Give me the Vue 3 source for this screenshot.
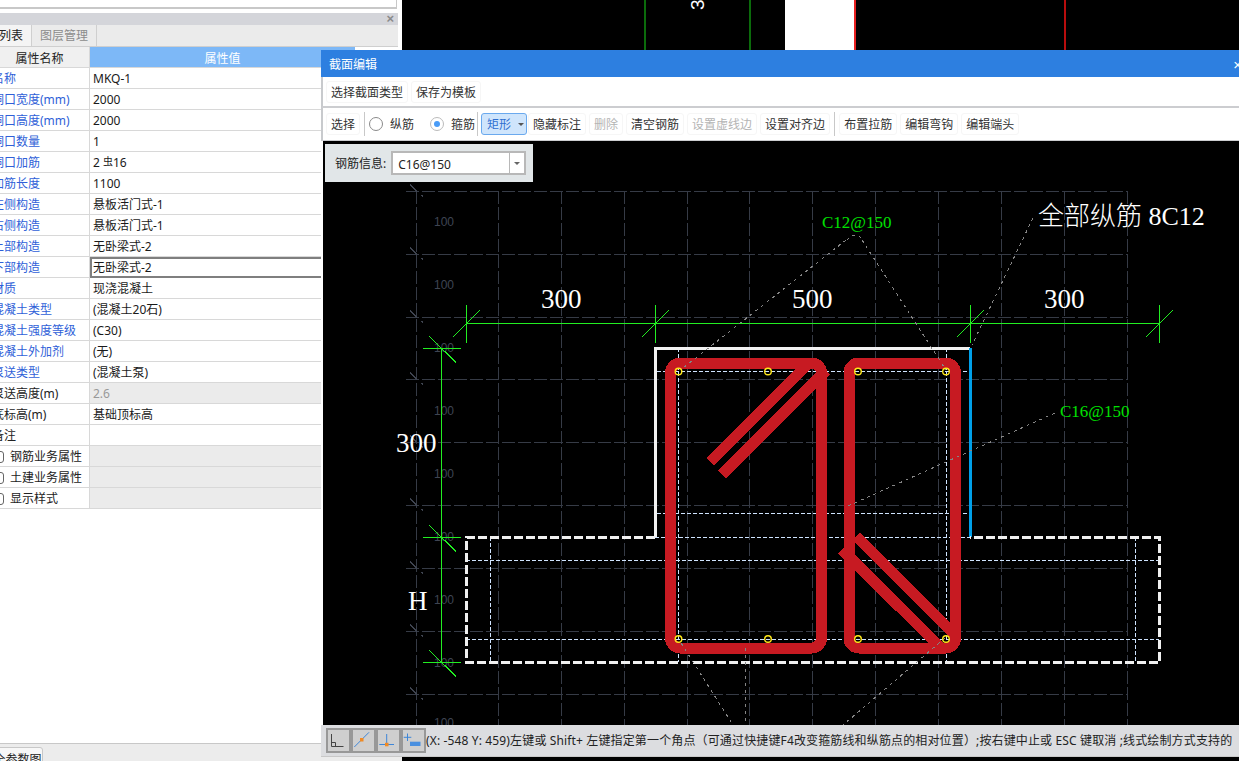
<script setup>
const rows = [
  { n: '名称', v: 'MKQ-1', blue: true },
  { n: '洞口宽度(mm)', v: '2000', blue: true },
  { n: '洞口高度(mm)', v: '2000', blue: true },
  { n: '洞口数量', v: '1', blue: true },
  { n: '洞口加筋', v: '', rebar: true, blue: true },
  { n: '加筋长度', v: '1100', blue: true },
  { n: '左侧构造', v: '悬板活门式-1', blue: true },
  { n: '右侧构造', v: '悬板活门式-1', blue: true },
  { n: '上部构造', v: '无卧梁式-2', blue: true },
  { n: '下部构造', v: '无卧梁式-2', blue: true, sel: true },
  { n: '材质', v: '现浇混凝土', blue: true },
  { n: '混凝土类型', v: '(混凝土20石)', blue: true },
  { n: '混凝土强度等级', v: '(C30)', blue: true },
  { n: '混凝土外加剂', v: '(无)', blue: true },
  { n: '泵送类型', v: '(混凝土泵)', blue: true },
  { n: '泵送高度(m)', v: '2.6', off: true },
  { n: '底标高(m)', v: '基础顶标高' },
  { n: '备注', v: '' },
  { n: '钢筋业务属性', v: '', group: true },
  { n: '土建业务属性', v: '', group: true },
  { n: '显示样式', v: '', group: true }
]
const tools = [
  { t: '布置拉筋' }, { t: '编辑弯钩' }, { t: '编辑端头' }
]
const gridX = [416.5, 498.5, 561.5, 624.5, 687.5, 749.5, 812.5, 875.5, 938.5, 1001.5, 1064.5, 1127.5]
const gridY = [191.5, 254.5, 317.5, 379.5, 442.5, 505.5, 568.5, 631.5, 694.5]
const labelY = [226, 289, 352, 415, 478, 541, 604, 667, 727]
const points = [
  [678.5, 371.5], [768, 371.5], [858, 371.5], [946, 371.5],
  [678.5, 639], [768, 639], [858, 639], [946, 639]
]
const dimX = [466.5, 655.5, 970.5, 1159.5]
const dimY = [348.5, 537.5, 662.5]
const leaders = [
  'M846 240L683 368', 'M862 240L946 370', 'M847 240Q855 230 863 240',
  'M1033 218L972 345', 'M1055 413L848 506',
  'M681 643L733 725', 'M945 638L843 725', 'M745.5 648V725'
]
</script>

<template>
  <div class="screen">
    <aside class="side">
      <div class="side-top"></div>
      <div class="side-head"><span class="side-x">×</span></div>
      <div class="tabs">
        <span class="tab on">构件列表</span>
        <span class="tab">图层管理</span>
      </div>
      <div class="table">
        <div class="tr thead">
          <div class="th">属性名称</div>
          <div class="th val">属性值</div>
        </div>
        <div v-for="r in rows" :key="r.n" class="tr">
          <div class="name" :class="{ blue: r.blue }">
            <template v-if="r.group"><i class="check"></i></template>{{ r.n }}
          </div>
          <div class="value" :class="{ off: r.off, shade: r.group, sel: r.sel }">
            <template v-if="r.rebar">2<small class="rebar">虫</small>16</template>
            <template v-else>{{ r.v }}</template>
          </div>
        </div>
      </div>
      <div class="side-foot"><span class="foot-tab">全参数图</span></div>
    </aside>

    <main class="stage">
      <svg class="stage-art" width="837" height="50" viewBox="402 0 837 50">
        <rect x="785" y="0" width="69" height="50" fill="#fff" />
        <rect x="644" y="0" width="2" height="50" fill="#0b6b0b" />
        <rect x="749" y="0" width="2" height="50" fill="#0b6b0b" />
        <rect x="854" y="0" width="2" height="50" fill="#e82020" />
        <rect x="1064" y="0" width="2" height="50" fill="#b80d0d" />
        <text class="stage-num" transform="translate(704 10) rotate(-90)">3</text>
      </svg>
    </main>

    <section class="dialog">
      <header class="title">
        <span>截面编辑</span>
        <span class="close">×</span>
      </header>
      <div class="menu">
        <button class="btn">选择截面类型</button>
        <button class="btn">保存为模板</button>
      </div>
      <div class="toolbar">
        <button class="btn">选择</button>
        <i class="sep first"></i>
        <label class="radio"><i class="dot"></i>纵筋</label>
        <label class="radio second"><i class="dot checked"></i>箍筋</label>
        <i class="sep tight"></i>
        <button class="btn picked">矩形<i class="caret"></i></button>
        <button class="btn">隐藏标注</button>
        <button class="btn dim">删除</button>
        <button class="btn">清空钢筋</button>
        <button class="btn dim">设置虚线边</button>
        <button class="btn">设置对齐边</button>
        <i class="sep wide"></i>
        <button v-for="t in tools" :key="t.t" class="btn">{{ t.t }}</button>
      </div>

      <div class="canvas">
        <svg class="drawing" width="916" height="584" viewBox="323 141 916 584">
          <g class="grid">
            <path v-for="x in gridX" :key="'x' + x" :d="`M${x} 191V725`" />
            <path v-for="y in gridY" :key="'y' + y" :d="`M406 ${y}H1128`" />
          </g>
          <g class="ticks">
            <path v-for="y in gridY" :key="'t' + y" :d="`M410 ${y - 7}L417 ${y}M421 ${y + 4}h1v1`" />
          </g>
          <text v-for="y in labelY" :key="'l' + y" class="hundred" x="434" :y="y">100</text>

          <g class="dim">
            <path d="M466 323.5H1160M441.5 349V662" />
            <g v-for="x in dimX" :key="'dx' + x">
              <path :d="`M${x} 305V343M${x - 13.5} 337L${x + 13.5} 310`" />
            </g>
            <g v-for="y in dimY" :key="'dy' + y">
              <path :d="`M423 ${y}H461M429 ${y - 12.5}L456 ${y + 14}`" />
            </g>
          </g>

          <g class="inner">
            <path d="M466 560.5H1159M466 639.5H1159M490.5 537V662M1135.5 537V662" />
            <path d="M678.5 348V662M946.5 348V662M657 371.5H970M657 513.5H970M655 537.5H970" />
          </g>

          <path class="wall" d="M655.5 537V348.5H970" />
          <path class="wall-blue" d="M970.5 348V537" />
          <path class="base" d="M655 537.5H466.5V662.5H1159.5V537.5H970" />

          <g class="steel">
            <rect x="670.5" y="363" width="151" height="285" rx="10" />
            <rect x="849" y="363" width="106.5" height="285" rx="10" />
            <path d="M710 462L808 364M722 474.5L826 370.5M856.5 536.5L955 635M842 549.5L944 651" />
          </g>

          <g class="leader">
            <path v-for="d in leaders" :key="d" :d="d" />
          </g>
          <circle v-for="p in points" :key="p.join()" class="pin" :cx="p[0]" :cy="p[1]" r="3.3" />

          <text class="tag" x="822" y="228">C12@150</text>
          <text class="tag" x="1060" y="417">C16@150</text>
          <text class="note" x="1038" y="225">全部纵筋 8C12</text>
          <text class="size" x="541" y="308">300</text>
          <text class="size" x="792" y="308">500</text>
          <text class="size" x="1044" y="308">300</text>
          <text class="size" x="396" y="452">300</text>
          <text class="size" x="408" y="610">H</text>
        </svg>

        <div class="rebar-info">
          <span class="info-label">钢筋信息:</span>
          <div class="combo">
            <span class="combo-text">C16@150</span>
            <span class="combo-arrow"><i class="caret gray"></i></span>
          </div>
        </div>
      </div>

      <footer class="status">
        <span class="snap">
          <svg width="21" height="21" viewBox="2 2 21 21">
            <path d="M5.5 6V18.5H17.5M5.5 14.5H9.5V18.5" fill="none" stroke="#444" />
          </svg>
        </span>
        <span class="snap">
          <svg width="21" height="21" viewBox="2 2 21 21">
            <path d="M3.3 19L18 4.3" stroke="#3e86d8" />
            <rect x="9" y="10" width="3.5" height="3.5" fill="#f08a24" />
          </svg>
        </span>
        <span class="snap">
          <svg width="21" height="21" viewBox="2 2 21 21">
            <path d="M10.7 6V16.5M3.3 16.5H18" stroke="#3e86d8" fill="none" />
            <rect x="9" y="14.8" width="3.5" height="3.5" fill="#f08a24" />
          </svg>
        </span>
        <span class="snap">
          <svg width="21" height="21" viewBox="2 2 21 21">
            <path d="M6.5 5.5V13M2.7 9.3H10.3" stroke="#3e86d8" fill="none" />
            <rect x="9" y="13.7" width="10.5" height="4.3" fill="#4a90e0" />
          </svg>
        </span>
        <span class="status-text">(X: -548 Y: 459)左键或 Shift+ 左键指定第一个角点（可通过快捷键F4改变箍筋线和纵筋点的相对位置）;按右键中止或 ESC 键取消 ;线式绘制方式支持的</span>
      </footer>
    </section>
  </div>
</template>

<style scoped>
.screen {
  position: relative;
  display: flex;
  width: 1239px;
  height: 761px;
  overflow: hidden;
  background: #000;
  font: 12px/20px "Noto Sans", "Noto Sans CJK SC", sans-serif;
  color: #222;
}
.side {
  display: flex;
  flex-direction: column;
  flex: none;
  width: 402px;
  height: 761px;
  background: #fff;
  overflow: hidden;
}
.side-top {
  flex: none;
  width: 397px;
  height: 9px;
  box-sizing: border-box;
  border: 1px solid #c8c8c8;
  border-width: 0 1px 2px 0;
  margin-bottom: 4px;
}
.side-head {
  flex: none;
  display: flex;
  justify-content: flex-end;
  align-items: center;
  width: 398px;
  height: 12px;
  box-sizing: border-box;
  background: #d4d5da;
  padding-right: 4px;
}
.side-x {
  font: bold 13px/12px "Liberation Sans", sans-serif;
  color: #8a8a8a;
}
.tabs {
  flex: none;
  display: flex;
  width: 423px;
  height: 22px;
  box-sizing: border-box;
  background: #ebebeb;
  border-bottom: 1px solid #cfcfcf;
  margin-left: -25px;
}
.tab {
  padding: 0 8px;
  line-height: 22px;
  color: #8c8c8c;
  border-right: 1px solid #cfcfcf;
}
.tab.on {
  padding: 0 8px 0 0;
  color: #222;
  background: #f4f4f4;
}
.table {
  flex: none;
  width: 365px;
  margin-left: -10px;
}
.tr {
  display: grid;
  grid-template-columns: 99px 1fr;
  grid-template-rows: 20px;
  height: 21px;
  box-sizing: border-box;
  border-bottom: 1px solid #d8d8d8;
}
.th {
  text-align: center;
  background: #f0f0f0;
  line-height: 23px;
}
.th.val {
  background: #7db8f7;
  color: #fff;
  border-left: 1px solid #d8d8d8;
}
.name {
  padding-left: 2px;
  white-space: nowrap;
  color: #222;
  line-height: 22px;
}
.name.blue {
  color: #2f5fd8;
}
.value {
  border-left: 1px solid #d8d8d8;
  padding-left: 3px;
  color: #1a1a1a;
  line-height: 22px;
}
.value.off {
  background: #ebebeb;
  color: #999;
}
.value.shade {
  background: #ebebeb;
}
.value.sel {
  box-shadow: inset 0 0 0 2px #7f7f7f;
  height: 21px;
}
.rebar {
  font-size: 10px;
  line-height: 10px;
  vertical-align: 2px;
  margin: 0 0 0 3px;
}
.check {
  display: inline-block;
  box-sizing: border-box;
  width: 12px;
  height: 12px;
  border: 1px solid #666;
  border-radius: 3px;
  margin-right: 6px;
  vertical-align: -2px;
}
.side-foot {
  flex: none;
  margin-top: auto;
  height: 18px;
  box-sizing: border-box;
  background: #ececec;
  border-top: 1px solid #c8c8c8;
  padding-top: 3px;
}
.foot-tab {
  display: block;
  width: 51px;
  height: 20px;
  margin-left: -8px;
  box-sizing: border-box;
  padding-top: 2px;
  background: #f7f7f7;
  border: 1px solid #c8c8c8;
  border-radius: 3px 3px 0 0;
  text-align: center;
  line-height: 19px;
}
.stage {
  flex: 1;
  background: #000;
}
.stage-art {
  display: block;
}
.stage-num {
  fill: #fff;
  font: 19px "Liberation Sans", sans-serif;
}
.dialog {
  position: absolute;
  left: 321px;
  top: 50px;
  width: 918px;
  height: 707px;
  box-sizing: border-box;
  display: flex;
  flex-direction: column;
  background: #fff;
  overflow: hidden;
}
.title {
  flex: none;
  display: flex;
  justify-content: space-between;
  align-items: center;
  box-sizing: border-box;
  height: 27px;
  padding: 2px 0 0 8px;
  background: #2d7fe0;
  color: #fff;
}
.close {
  margin-right: -3px;
  font: 15px/20px "Liberation Sans", sans-serif;
}
.menu,
.toolbar {
  flex: none;
  display: flex;
  align-items: center;
  gap: 3px;
  box-sizing: border-box;
  border-left: 2px solid #c8cacd;
  padding-left: 3px;
  background: #fff;
}
.menu {
  height: 31px;
  border-bottom: 2px solid #cccdd0;
  padding-top: 1px;
}
.toolbar {
  height: 33px;
  border-bottom: 1px solid #cccdd0;
}
.btn {
  flex: none;
  height: 22px;
  box-sizing: border-box;
  padding: 2px 4px 0;
  border: 1px solid #f6f6f6;
  border-radius: 3px;
  background: #fff;
  font: 12px/18px "Noto Sans", "Noto Sans CJK SC", sans-serif;
  color: #333;
  white-space: nowrap;
}
.btn.dim {
  color: #b4b4b4;
}
.btn.picked {
  display: flex;
  align-items: center;
  width: 46px;
  margin-right: -2px;
  background: #cfe5fc;
  border-color: #6aa9ee;
  color: #2f6fd0;
  padding: 2px 5px 0;
}
.btn.picked .caret {
  flex: none;
  margin-left: 7px;
  margin-bottom: 2px;
}
.caret {
  width: 0;
  height: 0;
  border: 3px solid transparent;
  border-top: 3px solid #555;
  border-bottom-width: 0;
}
.sep {
  flex: none;
  width: 1px;
  height: 24px;
  background: #c8c8c8;
}
.sep.first {
  margin-left: 1px;
}
.sep.tight {
  margin-left: -1px;
}
.sep.wide {
  margin: 0 1px;
}
.radio {
  display: flex;
  align-items: center;
  padding-top: 2px;
  color: #333;
  margin-left: 1px;
}
.radio.second {
  margin-left: 13px;
}
.dot {
  position: relative;
  flex: none;
  box-sizing: border-box;
  width: 14px;
  height: 14px;
  margin: 0 7px 2px 0;
  border: 1px solid #8a8a8a;
  border-radius: 50%;
  background: #fff;
}
.dot.checked {
  border-color: #bbb;
}
.dot.checked::after {
  content: "";
  position: absolute;
  left: 3px;
  top: 3px;
  width: 6px;
  height: 6px;
  border-radius: 50%;
  background: #4a9cf7;
}
.canvas {
  position: relative;
  flex: 1;
  margin-left: 2px;
  background: #000;
  overflow: hidden;
}
.drawing {
  display: block;
  shape-rendering: crispEdges;
}
.grid path {
  fill: none;
  stroke: #363b46;
  stroke-dasharray: 13 3;
}
.ticks path {
  stroke: #3f4450;
  fill: none;
}
.hundred {
  fill: #3f4553;
  font: 12px "Liberation Sans", sans-serif;
}
.dim path {
  stroke: #22ee22;
  fill: none;
}
.inner path {
  stroke: #cfe4ff;
  stroke-dasharray: 4 2;
  fill: none;
}
.wall {
  fill: none;
  stroke: #f2f2f2;
  stroke-width: 3;
}
.wall-blue {
  fill: none;
  stroke: #00a0e9;
  stroke-width: 3;
}
.base {
  fill: none;
  stroke: #f0f0f0;
  stroke-width: 3;
  stroke-dasharray: 9 3;
}
.steel rect,
.steel path {
  fill: none;
  stroke: #c71a22;
  stroke-width: 11;
}
.leader path {
  fill: none;
  stroke: #858585;
  stroke-dasharray: 3 4;
}
.pin {
  fill: none;
  stroke: #ffe81a;
  stroke-width: 1.4;
  shape-rendering: geometricPrecision;
}
.tag {
  fill: #00e000;
  font: 17px "Liberation Serif", serif;
}
.note {
  fill: #fff;
  font: 300 26px "Liberation Serif", "Noto Sans CJK SC", serif;
}
.size {
  fill: #fff;
  font: 27px "Liberation Serif", serif;
}
.rebar-info {
  position: absolute;
  left: 2px;
  top: 3px;
  display: flex;
  align-items: center;
  gap: 5px;
  box-sizing: border-box;
  width: 208px;
  height: 38px;
  padding-left: 10px;
  background: #e1e6e8;
  color: #222;
}
.info-label {
  padding-top: 1px;
}
.combo {
  display: flex;
  box-sizing: border-box;
  width: 135px;
  height: 24px;
  border: 2px solid #b8b8b8;
  background: #fff;
}
.combo-text {
  flex: 1;
  padding-left: 5px;
  line-height: 23px;
}
.combo-arrow {
  display: flex;
  align-items: center;
  justify-content: center;
  width: 14px;
  border-left: 1px solid #b8b8b8;
}
.caret.gray {
  border-top-color: #666;
}
.status {
  flex: none;
  display: flex;
  align-items: center;
  height: 32px;
  padding-left: 5px;
  background: #dcdde0;
  white-space: nowrap;
  border-bottom: 1px solid #c8c8c8;
  box-sizing: border-box;
}
.snap {
  flex: none;
  display: flex;
  box-sizing: border-box;
  width: 25px;
  height: 25px;
  border: 2px solid #989898;
  background: #cfcfcf;
}
.status-text {
  color: #222;
  letter-spacing: 0.14px;
}
</style>

<style>
html, body { margin: 0; background: #000; overflow: hidden; }
</style>
